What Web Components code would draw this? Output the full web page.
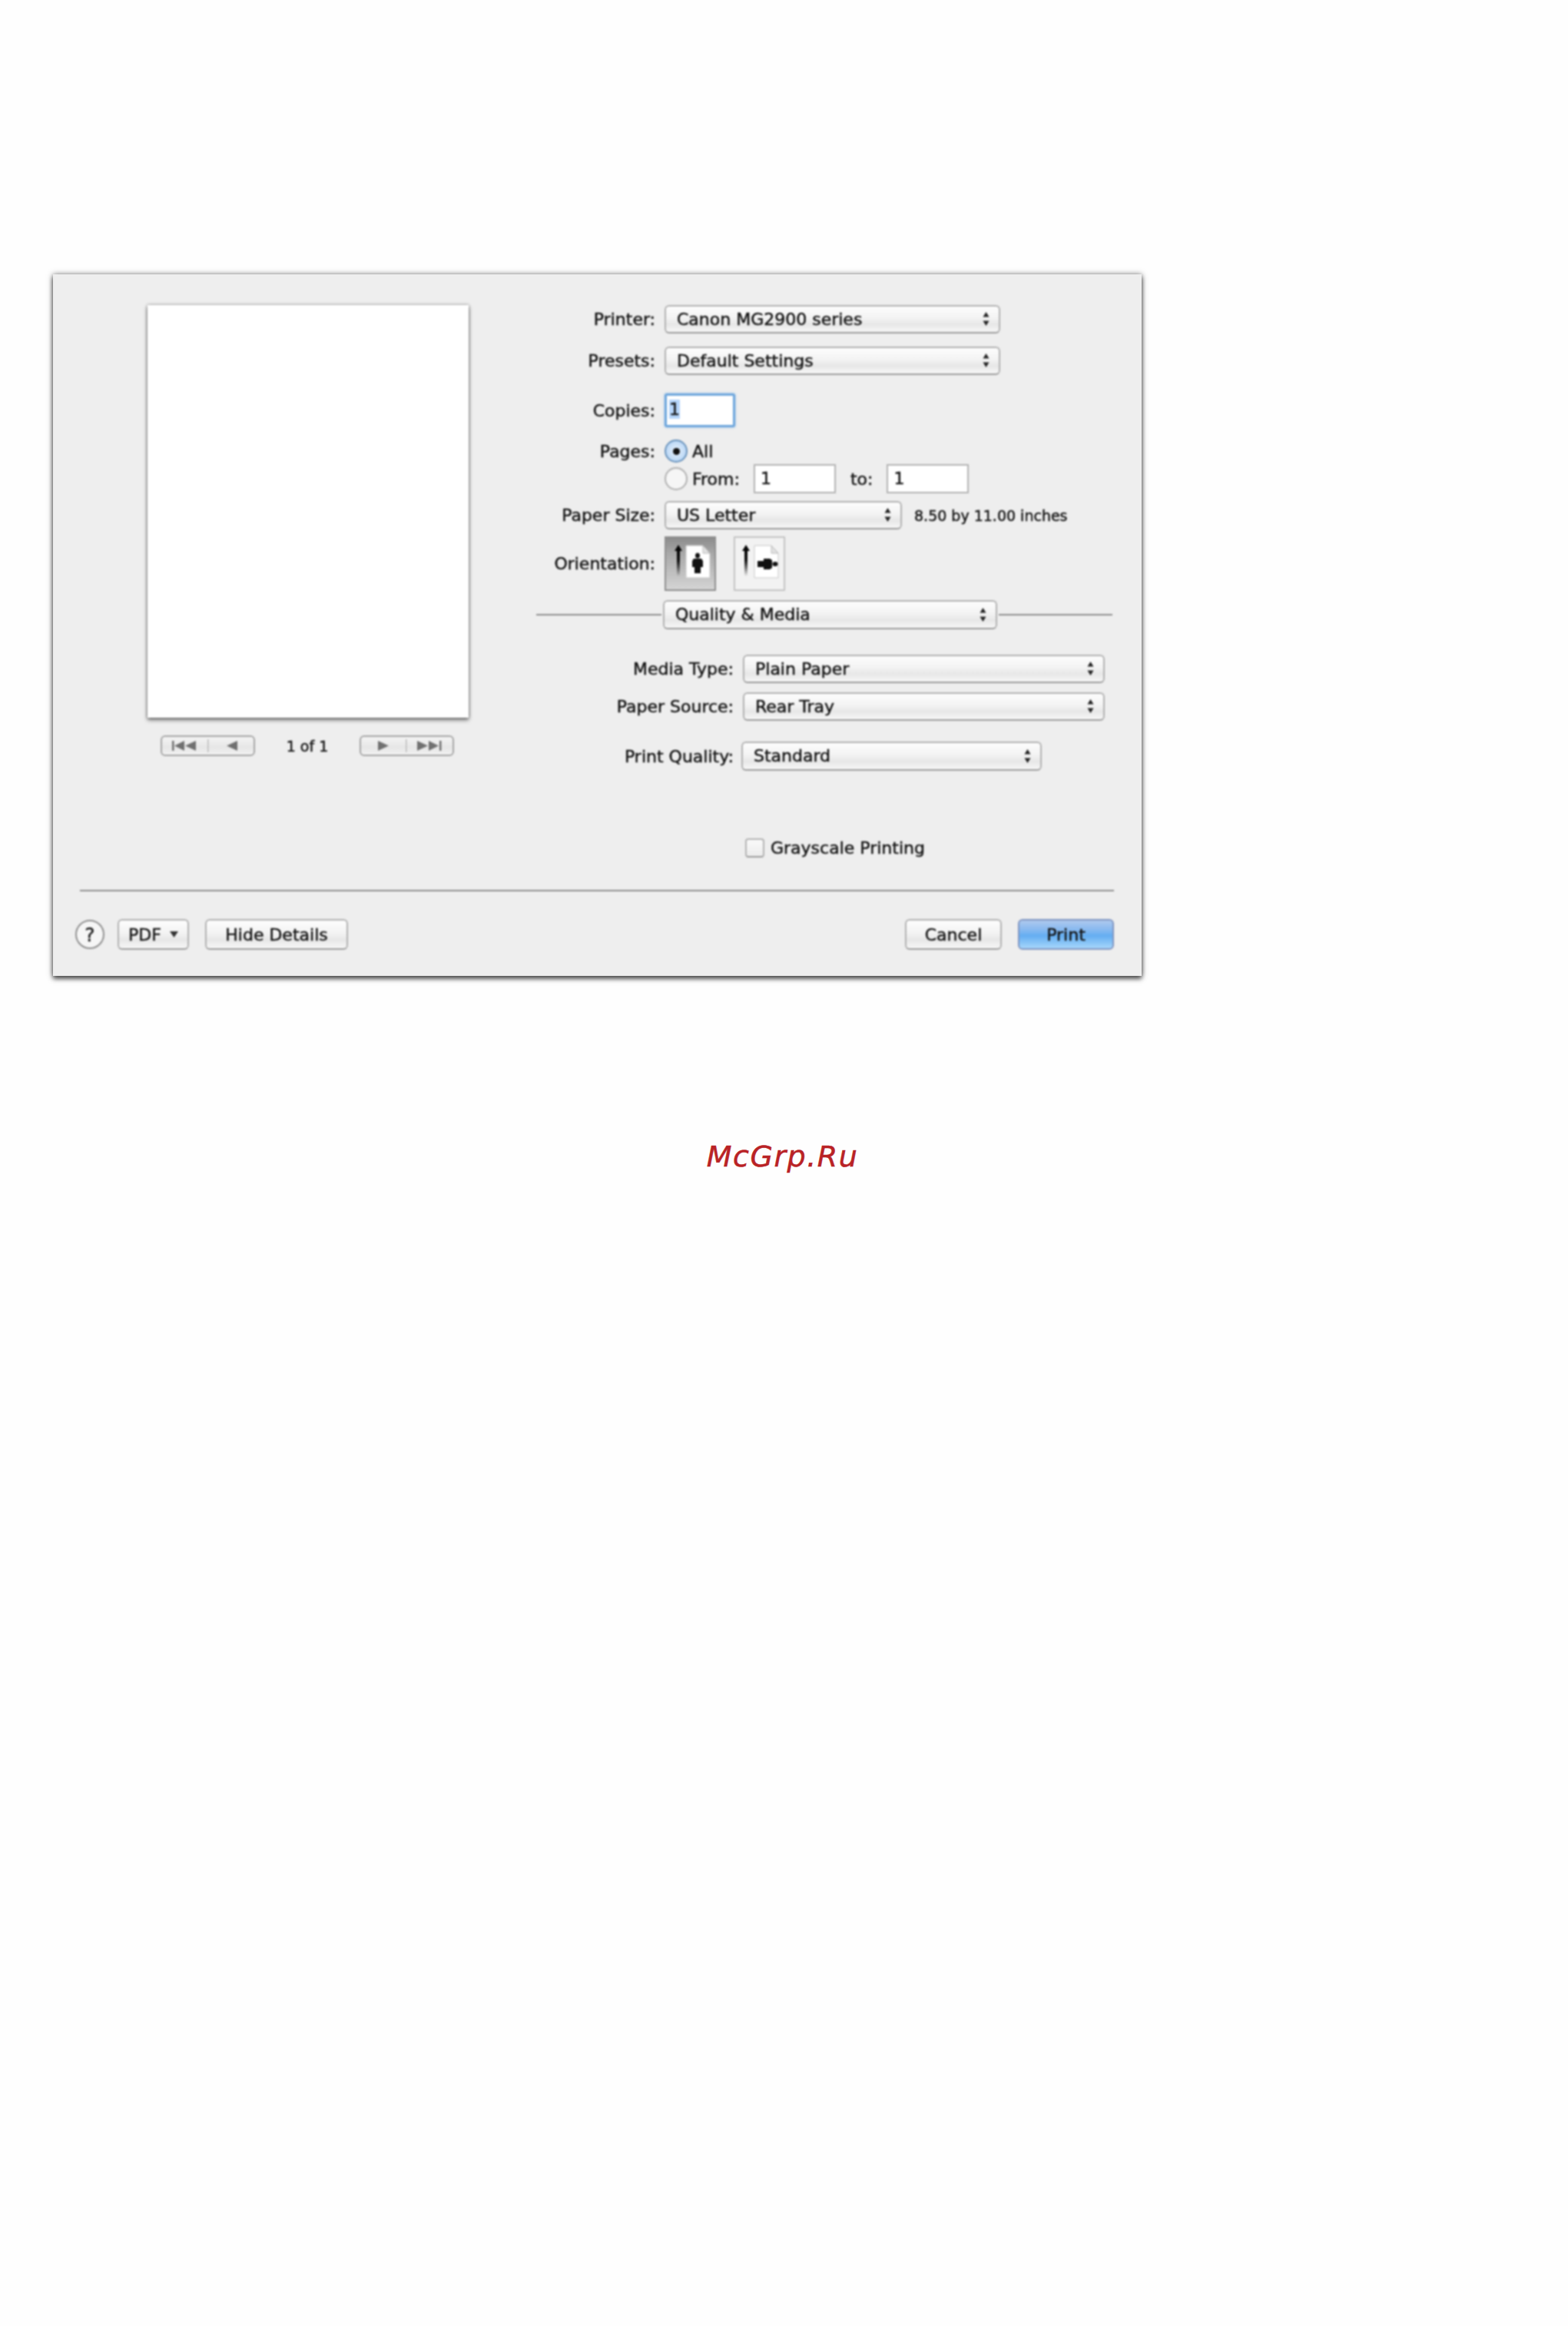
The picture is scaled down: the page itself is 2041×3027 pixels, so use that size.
<!DOCTYPE html>
<html><head><meta charset="utf-8"><title>Print</title>
<style>
html,body{margin:0;background:#fefefe;}
body{padding-top:357px;font-family:"DejaVu Sans","Liberation Sans",sans-serif;color:#141414;min-height:2670px;overflow:hidden}
</style></head><body>
<print-dialog>
  <div slot="left">
    <paper-preview></paper-preview>
  </div>
  <div slot="form">
    <form-row label="Printer:"><pop-select style="width:437px">Canon MG2900 series</pop-select></form-row>
    <form-row label="Presets:" style="margin-top:17px"><pop-select style="width:437px">Default Settings</pop-select></form-row>
    <form-row label="Copies:" style="margin-top:24px"><num-field focus style="width:92px;height:44px"><span style="background:#b5d5fb">1</span></num-field></form-row>
    <form-row label="Pages:" style="margin-top:16px"><mac-radio checked>All</mac-radio></form-row>
    <form-row label="" style="margin-top:2px">
      <mac-radio>From:</mac-radio>
      <num-field style="width:107px;height:38px;margin-left:18px">1</num-field>
      <span style="margin:0 18px 0 19px;font-size:22px">to:</span>
      <num-field style="width:107px;height:38px">1</num-field>
    </form-row>
    <form-row label="Paper Size:" style="margin-top:10px"><pop-select style="width:309px">US Letter</pop-select><span style="font-size:19px;margin-left:16px">8.50 by 11.00 inches</span></form-row>
    <form-row label="Orientation:" style="margin-top:9px"><orient-btn selected></orient-btn><orient-btn land style="margin-left:23px"></orient-btn></form-row>
    <section-bar style="margin-top:12px">Quality &amp; Media</section-bar>
    <form-row wide label="Media Type:" style="margin-top:33px"><pop-select style="width:471px">Plain Paper</pop-select></form-row>
    <form-row wide label="Paper Source:" style="margin-top:12px"><pop-select style="width:471px">Rear Tray</pop-select></form-row>
    <form-row wide label="Print Quality:" style="margin-top:27px"><pop-select style="width:391px;height:38px;margin-left:-2px">Standard</pop-select></form-row>
    <mac-check style="margin:88px 0 0 272px">Grayscale Printing</mac-check>
  </div>
  <help-btn slot="fl"></help-btn>
  <push-btn slot="fl" style="width:93px;margin-left:17px">PDF<svg width="11" height="8" viewBox="0 0 11 8" style="margin-left:11px"><path d="M0 0h11L5.500 8z" fill="#333"/></svg></push-btn>
  <push-btn slot="fl" style="width:186px;margin-left:21px">Hide Details</push-btn>
  <push-btn slot="fr" style="width:126px">Cancel</push-btn>
  <push-btn slot="fr" primary style="width:125px;margin-left:21px">Print</push-btn>
</print-dialog>
<water-mark>McGrp.Ru</water-mark>

<script>
function def(name, css, html){
  customElements.define(name, class extends HTMLElement{
    connectedCallback(){
      if(this.shadowRoot) return;
      const s=this.attachShadow({mode:'open'});
      s.innerHTML='<style>'+css+'</style>'+(typeof html==='function'?html(this):html);
    }
  });
}
def('print-dialog',`
  :host{display:block;box-sizing:border-box;width:1417px;height:913px;margin-left:69px;background:#eee;padding-top:40px;
    box-shadow:0 0 7px rgba(0,0,0,.5),0 4px 6px rgba(0,0,0,.6);font-size:22px;-webkit-text-stroke:.45px currentColor}
  .in{filter:blur(.9px);height:100%;display:flex;flex-direction:column}
  .main{display:flex;height:761px}
  .l{width:629px;padding-left:123px;box-sizing:border-box}
  .f{width:750px}
  hr{border:0;height:2px;background:#8f8f8f;margin:0 36px 0 35px}
  .foot{display:flex;justify-content:space-between;align-items:center;margin:36px 36px 0 29px}
  .g{display:flex;align-items:center}
`,`<div class="in"><div class="main"><div class="l"><slot name="left"></slot></div><div class="f"><slot name="form"></slot></div></div>
  <hr><div class="foot"><div class="g"><slot name="fl"></slot></div><div class="g"><slot name="fr"></slot></div></div></div>`);

def('paper-preview',`
  :host{display:block;font-size:19px;width:418px}
  .p{width:418px;height:537px;background:#fff;box-shadow:0 0 4px rgba(0,0,0,.4),0 3px 5px rgba(0,0,0,.5)}
  .b{display:flex;align-items:center;justify-content:space-between;margin:23px 19px 0 17px}
`,`<div class="p"></div><div class="b"><pager-btn first></pager-btn><span>1 of 1</span><pager-btn></pager-btn></div>`);

def('pager-btn',`
  :host{display:block;width:123px;height:27px;box-sizing:border-box;border:2px solid #a6a6a6;border-radius:6px;background:linear-gradient(#f4f4f4,#e6e6e6 60%,#f2f2f2)}
  svg{display:block}
`,el=>el.hasAttribute('first')
 ?`<svg width="119" height="23" viewBox="0 0 119 23"><g fill="#707070"><rect x="13" y="5" width="2.500" height="13"/><path d="M29 5v13l-13-6.500zM44 5v13l-14-6.500zM98 5v13l-14-6.500z"/></g><rect x="59" y="3" width="1.500" height="17" fill="#bbb"/></svg>`
 :`<svg width="119" height="23" viewBox="0 0 119 23"><g fill="#707070"><path d="M22 5v13l14-6.500zM73 5v13l14-6.500zM88 5v13l13-6.500z"/><rect x="102" y="5" width="2.500" height="13"/></g><rect x="58" y="3" width="1.500" height="17" fill="#bbb"/></svg>`);

def('form-row',`
  :host{display:flex;align-items:center;font-size:22px;white-space:nowrap}
  .lb{width:155px;flex:none;text-align:right;margin-right:12px}
  :host([wide]) .lb{width:257px}
`,el=>`<span class="lb">${el.getAttribute('label')}</span><slot></slot>`);

const arrows=`<svg width="9" height="20" viewBox="0 0 9 20"><path d="M4.500 1 8.500 7.500H.5zM4.500 19 .5 12.500h8z" fill="#222"/></svg>`;
def('pop-select',`
  :host{display:flex;box-sizing:border-box;height:37px;flex:none;align-items:center;justify-content:space-between;padding:0 12px 1px 14px;
    border:2px solid #b2b2b2;border-bottom-color:#9c9c9c;border-radius:6px;background:linear-gradient(#fdfdfd,#f3f3f3 45%,#e7e7e7 70%,#f7f7f7);font-size:22px;white-space:nowrap}
`,`<span><slot></slot></span>`+arrows);

def('num-field',`
  :host{display:block;box-sizing:border-box;flex:none;background:#fff;border:2px solid #b4b4b4;padding:0 0 0 7px;line-height:34px;font-size:22px}
  :host([focus]){border:3px solid #6ea6dc;border-radius:3px;box-shadow:0 0 3px #7db2e6;line-height:36px;padding-left:3px}
`,`<slot></slot>`);

def('mac-radio',`
  :host{display:inline-flex;align-items:center;font-size:22px;height:30px}
  .r{width:30px;height:30px;border-radius:50%;box-sizing:border-box;border:2px solid #b0b0b0;background:#f6f6f6;margin-right:6px;display:flex;align-items:center;justify-content:center;flex:none}
  :host([checked]) .r{border-color:#6a93bc;background:radial-gradient(#e8f2fd,#a9cdf2)}
  .d{width:9px;height:9px;border-radius:50%;background:#111;display:none}
  :host([checked]) .d{display:block}
`,`<span class="r"><span class="d"></span></span><slot></slot>`);

def('mac-check',`
  :host{display:flex;align-items:center;font-size:22px;height:25px;white-space:nowrap}
  .c{width:25px;height:25px;box-sizing:border-box;border:2px solid #b4b4b4;border-bottom-color:#9d9d9d;border-radius:4px;background:linear-gradient(#fafafa,#ececec);margin-right:8px;flex:none}
`,`<span class="c"></span><slot></slot>`);

def('orient-btn',`
  :host{display:block;width:67px;height:71px;flex:none;box-sizing:border-box;border:2px solid #c4c4c4;background:#f2f2f2}
  :host([selected]){border-color:#8e8e8e;background:linear-gradient(#8c8c8c,#a8a8a8 30%,#d4d4d4)}
  svg{display:block}
`,el=>{
  const land=el.hasAttribute('land');
  const cx=land?14:16, px=land?25:26;
  const man=`<g fill="#111"><ellipse cx="${px+15}" cy="23" rx="3" ry="3.500"/><path d="M${px+10} 27h10l2 3v8h-3v8h-8v-8h-3v-8z"/></g>`;
  const person=land?`<g transform="rotate(90 ${px+15} 34) translate(0 -1)">${man}</g>`:man;
  return `<svg width="63" height="67" viewBox="0 0 63 67">
   <defs><linearGradient id="f" x1="0" y1="0" x2="0" y2="1"><stop offset="0" stop-color="#000"/><stop offset=".5" stop-color="#111"/><stop offset="1" stop-color="#000" stop-opacity="0"/></linearGradient></defs>
   <path d="M${cx} 9l5 8h-3v33h-4V17h-3z" fill="url(#f)"/>
   <path d="M${px} 10h22l9 10v32H${px}z" fill="#fff" stroke="#c8c8c8" stroke-width="1"/>
   <path d="M${px+22} 10v10h9z" fill="#e2e2e2" stroke="#bbb" stroke-width="1"/>${person}</svg>`;
});

def('section-bar',`
  :host{display:flex;align-items:center;height:38px}
  .ln{height:2px;background:#8f8f8f}
`,`<span class="ln" style="width:163px;margin-right:2px"></span><pop-select style="width:435px;height:38px"><slot></slot></pop-select><span class="ln" style="width:148px;margin-left:2px"></span>`);

def('push-btn',`
  :host{display:flex;box-sizing:border-box;height:40px;flex:none;align-items:center;justify-content:center;border:2px solid #b2b2b2;border-bottom-color:#9c9c9c;border-radius:6px;
    background:linear-gradient(#fdfdfd,#f3f3f3 45%,#e7e7e7 70%,#f7f7f7);font-size:22px;white-space:nowrap}
  :host([primary]){border-color:#7f95c2;background:linear-gradient(#aec9ee,#85b8f0 35%,#64aef2 55%,#a6d6fb)}
`,`<slot></slot>`);

def('help-btn',`
  :host{display:flex;width:38px;height:38px;flex:none;box-sizing:border-box;border:2px solid #8f8f8f;border-radius:50%;background:#f6f6f6;align-items:center;justify-content:center;font-size:25px;color:#222}
`,`?`);

def('water-mark',`
  :host{display:block;text-align:center;margin-top:213px;font:oblique 38px/44px "DejaVu Sans",sans-serif;color:#b92225;letter-spacing:1.500px;padding-right:4px;-webkit-text-stroke:.5px currentColor}
`,`<slot></slot>`);
</script>
</body></html>
